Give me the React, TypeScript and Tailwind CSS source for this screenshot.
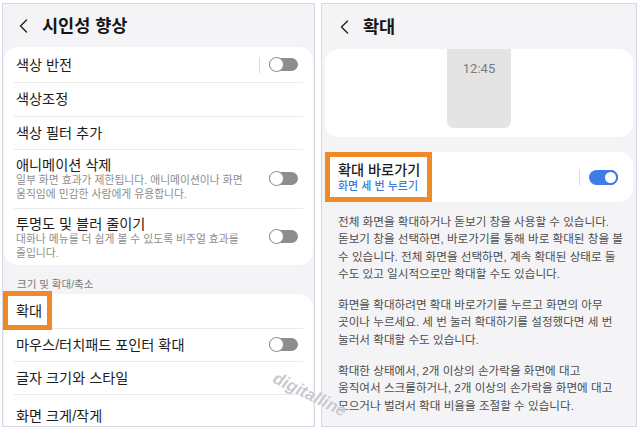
import * as React from 'react'

const Back: React.FC = () => (
  <svg width="9" height="14" viewBox="0 0 9 14" fill="none" className="shrink-0">
    <path d="M7.5 1 L1.5 7 L7.5 13" stroke="#222" strokeWidth="1.4" strokeLinecap="round" strokeLinejoin="round" />
  </svg>
)

const Toggle: React.FC<{ on?: boolean }> = ({ on }) =>
  on ? (
    <div className="relative h-[15px] w-[29px] shrink-0 rounded-full bg-[#3d7de6]">
      <div className="absolute right-0 top-0 h-[15px] w-[15px] rounded-full border-[2px] border-[#3d7de6] bg-white" />
    </div>
  ) : (
    <div className="relative h-[13px] w-[29px] shrink-0 rounded-full bg-[#8d8d8d]">
      <div className="absolute -top-px left-0 h-[15px] w-[15px] rounded-full border-[1.5px] border-[#8d8d8d] bg-white" />
    </div>
  )

const Sep: React.FC = () => <div className="mr-[9px] h-[16px] w-px bg-[#dcdcdc]" />

const Row: React.FC<{ h: string; last?: boolean; children: React.ReactNode }> = ({ h, last, children }) => (
  <div className={`relative flex items-center px-[2px] pr-[5px] ${h} ${last ? '' : 'border-b border-[#ebebeb]'}`}>
    {children}
  </div>
)

const Title: React.FC<{ children: React.ReactNode }> = ({ children }) => (
  <span className="flex-1 text-[14.2px] leading-[18px] text-[#1c1c1c]">{children}</span>
)

const LeftPanel: React.FC = () => (
  <div className="flex h-[424px] w-[313px] shrink-0 flex-col overflow-hidden border border-[#d6d6e4] bg-[#f4f4f6]">
    <div className="flex h-[43px] shrink-0 items-center pl-[16px]">
      <Back />
      <span className="ml-[14px] text-[17.5px] font-bold leading-[20px] text-[#161616]">시인성 향상</span>
    </div>

    <div className="mx-px rounded-[14px] bg-white px-[10px]">
      <Row h="h-[36px]">
        <Title>색상 반전</Title>
        <Sep />
        <Toggle />
      </Row>
      <Row h="h-[33.5px]">
        <Title>색상조정</Title>
      </Row>
      <Row h="h-[33px]">
        <Title>색상 필터 추가</Title>
      </Row>
      <Row h="h-[59px]">
        <div className="flex-1 self-start pt-[7.5px]">
          <div className="text-[14.2px] leading-[16px] text-[#1c1c1c]">애니메이션 삭제</div>
          <div className="text-[10.8px] leading-[14px] text-[#8e8e8e]">
            일부 화면 효과가 제한됩니다. 애니메이션이나 화면
            <br />
            움직임에 민감한 사람에게 유용합니다.
          </div>
        </div>
        <Toggle />
      </Row>
      <Row h="h-[56px]" last>
        <div className="flex-1 self-start pt-[7.5px]">
          <div className="text-[14.2px] leading-[16px] text-[#1c1c1c]">투명도 및 블러 줄이기</div>
          <div className="text-[10.8px] leading-[14px] text-[#8e8e8e]">
            대화나 메뉴를 더 쉽게 볼 수 있도록 비주얼 효과를
            <br />
            줄입니다.
          </div>
        </div>
        <Toggle />
      </Row>
    </div>

    <div className="shrink-0 pb-[3px] pl-[14px] pt-[12px] text-[10.5px] leading-[14px] text-[#777]">크기 및 확대/축소</div>

    <div className="mx-px rounded-t-[14px] bg-white px-[10px]">
      <Row h="h-[35px]">
        <Title>확대</Title>
        <div className="absolute -left-[11px] -top-[3px] h-[39px] w-[49px] border-[5px] border-[#f08a26]" />
      </Row>
      <Row h="h-[33.5px]">
        <Title>마우스/터치패드 포인터 확대</Title>
        <Toggle />
      </Row>
      <Row h="h-[32.5px]">
        <Title>글자 크기와 스타일</Title>
      </Row>
      <Row h="h-[43px]" last>
        <Title>화면 크게/작게</Title>
      </Row>
    </div>
  </div>
)

const RightPanel: React.FC = () => (
  <div className="flex h-[424px] w-[316px] shrink-0 flex-col overflow-hidden border border-[#d6d6e4] bg-[#f4f4f6]">
    <div className="flex h-[45px] shrink-0 items-center pl-[18px]">
      <Back />
      <span className="ml-[14px] text-[17.5px] font-bold leading-[20px] text-[#161616]">확대</span>
    </div>

    <div className="mx-[3px] flex h-[88px] shrink-0 justify-center rounded-[14px] bg-white">
      <div className="h-[79px] w-[64px] rounded-b-[7px] bg-[#e4e4e4] pt-[12px] text-center font-['Roboto',sans-serif] text-[13px] leading-[16px] text-[#7c7c7c]">
        12:45
      </div>
    </div>

    <div className="relative mx-[3px] mt-[15px] flex h-[50px] shrink-0 items-center rounded-[14px] bg-white pl-[13px] pr-[15px]">
      <div className="flex-1 pt-px">
        <div className="text-[14.2px] font-medium leading-[17px] text-[#1c1c1c]">확대 바로가기</div>
        <div className="text-[11px] font-medium leading-[15px] text-[#3a79d9]">화면 세 번 누르기</div>
      </div>
      <Sep />
      <Toggle on />
      <div className="absolute left-0 top-0 h-[50px] w-[107px] border-[5px] border-[#f08a26]" />
    </div>

    <div className="flex flex-col gap-[14px] pl-[16px] pt-[11px] text-[11.6px] leading-[17.3px] text-[#4d4d4d]">
      <p>
        전체 화면을 확대하거나 돋보기 창을 사용할 수 있습니다.
        <br />
        돋보기 창을 선택하면, 바로가기를 통해 바로 확대된 창을 볼
        <br />
        수 있습니다. 전체 화면을 선택하면, 계속 확대된 상태로 둘
        <br />
        수도 있고 일시적으로만 확대할 수도 있습니다.
      </p>
      <p>
        화면을 확대하려면 확대 바로가기를 누르고 화면의 아무
        <br />
        곳이나 누르세요. 세 번 눌러 확대하기를 설정했다면 세 번
        <br />
        눌러서 확대할 수도 있습니다.
      </p>
      <p>
        확대한 상태에서, 2개 이상의 손가락을 화면에 대고
        <br />
        움직여서 스크롤하거나, 2개 이상의 손가락을 화면에 대고
        <br />
        모으거나 벌려서 확대 비율을 조절할 수 있습니다.
      </p>
    </div>
  </div>
)

export default function App() {
  return (
    <div className="relative flex h-[430px] w-[640px] gap-[6px] overflow-hidden bg-white pl-[2px] pt-[3px] font-['Liberation_Sans','Noto_Sans_CJK_KR',sans-serif]">
      <LeftPanel />
      <RightPanel />
      <span className="pointer-events-none absolute left-[270px] top-[382px] rotate-[26deg] font-['Liberation_Sans',sans-serif] text-[17px] font-bold italic text-[#c9c9d2] [text-shadow:0_0_2px_#fff]">
        digitalline
      </span>
    </div>
  )
}
